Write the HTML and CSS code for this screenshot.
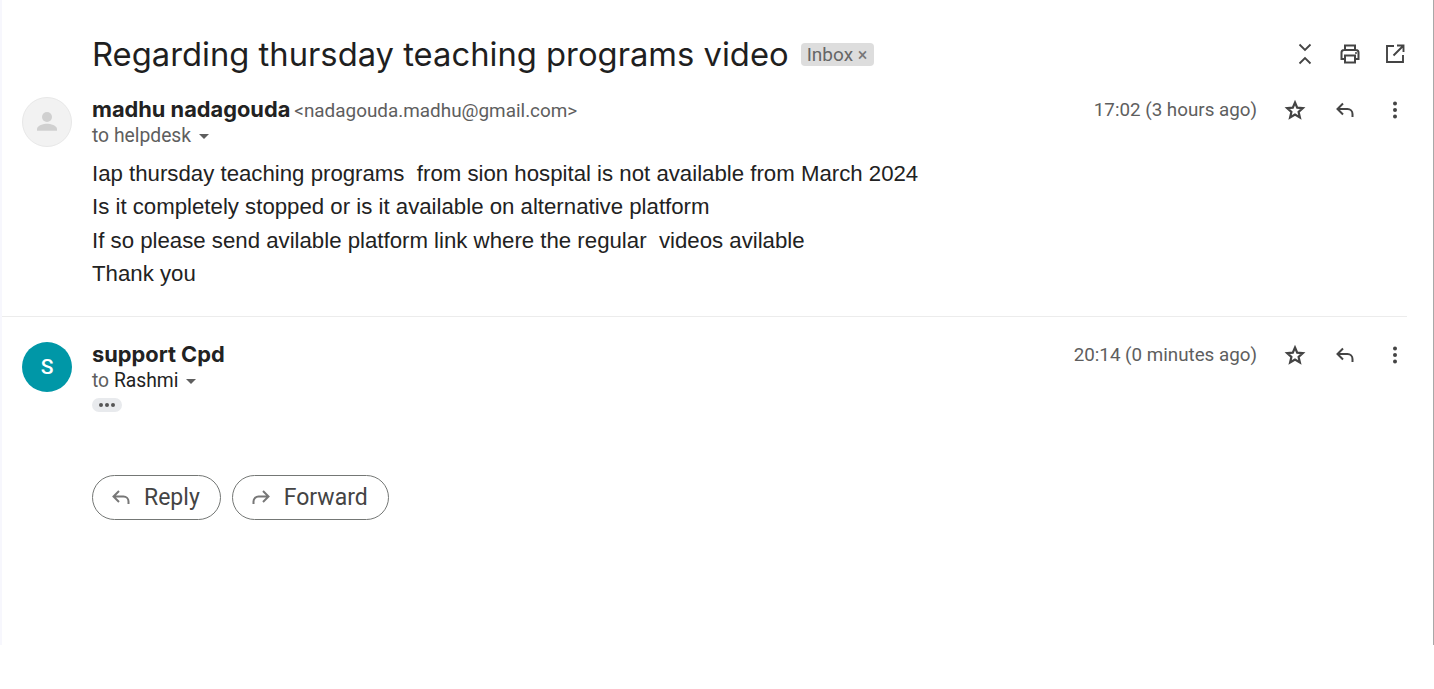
FILE: index.html
```html
<!DOCTYPE html>
<html lang="en">
<head>
    <meta charset="UTF-8">
    <meta name="viewport" content="width=device-width, initial-scale=1.0">
    <title>Regarding thursday teaching programs video</title>
    <link rel="stylesheet" href="styles.css">
</head>
<body>
    <div class="page">
        <div class="subject-row">
            <h1 class="subject">Regarding thursday teaching programs video</h1>
            <span class="label">Inbox <span class="label-x">×</span></span>
            <div class="top-icons">
                <svg class="icon" viewBox="0 0 24 24"><path d="M6.500 2.500 12 8l5.500-5.500M6.500 21.500 12 16l5.500 5.500" fill="none" stroke="#444" stroke-width="1.800"/></svg>
                <svg class="icon" viewBox="0 0 24 24"><path d="M7 8V3.500h10V8M7 17H3.500V10.500a2.500 2.500 0 0 1 2.500-2.500h12a2.500 2.500 0 0 1 2.500 2.500V17H17M7 13.500h10v7H7z" fill="none" stroke="#444" stroke-width="2"/><circle cx="18" cy="11" r="1" fill="#444"/></svg>
                <svg class="icon" viewBox="0 0 24 24"><path d="M11 4H4v16h16v-7M14 3.500h6.500V10M20 4 10.500 13.500" fill="none" stroke="#444" stroke-width="1.900"/></svg>
            </div>
        </div>

        <div class="message">
            <div class="avatar avatar-blank">
                <svg viewBox="0 0 24 24" width="30" height="30"><circle cx="12" cy="8" r="4" fill="#d0d0d0"/><path d="M4 19v-1.500c0-2.700 5.300-4.200 8-4.200s8 1.500 8 4.200V19z" fill="#d0d0d0"/></svg>
            </div>
            <div class="message-main">
                <div class="message-head">
                    <div class="sender-info">
                        <div><span class="sender">madhu nadagouda</span> <span class="email">&lt;nadagouda.madhu@gmail.com&gt;</span></div>
                        <div class="recipient">to helpdesk <span class="caret"></span></div>
                    </div>
                    <div class="msg-meta">
                        <span class="time">17:02 (3 hours ago)</span>
                        <svg class="icon" viewBox="0 0 24 24"><path d="M12 4.500 14.200 9.700 19.800 10.200 15.600 13.900 16.900 19.400 12 16.500 7.100 19.400 8.400 13.900 4.200 10.200 9.800 9.700z" fill="none" stroke="#444" stroke-width="2.200"/></svg>
                        <svg class="icon" viewBox="0 0 24 24"><path d="M10 5.500 4.500 11l5.500 5.500M5 11h9.500a5 5 0 0 1 5 5v3" fill="none" stroke="#444" stroke-width="2"/></svg>
                        <svg class="icon" viewBox="0 0 24 24"><circle cx="12" cy="5.500" r="2" fill="#444"/><circle cx="12" cy="12" r="2" fill="#444"/><circle cx="12" cy="18.500" r="2" fill="#444"/></svg>
                    </div>
                </div>
                <div class="message-body">
                    <p>Iap thursday teaching programs  from sion hospital is not available from March 2024</p>
                    <p>Is it completely stopped or is it available on alternative platform</p>
                    <p>If so please send avilable platform link where the regular  videos avilable</p>
                    <p>Thank you</p>
                </div>
            </div>
        </div>

        <hr class="divider">

        <div class="message">
            <div class="avatar avatar-s">S</div>
            <div class="message-main">
                <div class="message-head">
                    <div class="sender-info">
                        <div><span class="sender">support Cpd</span></div>
                        <div class="recipient">to <span class="recipient-name">Rashmi</span> <span class="caret"></span></div>
                    </div>
                    <div class="msg-meta">
                        <span class="time">20:14 (0 minutes ago)</span>
                        <svg class="icon" viewBox="0 0 24 24"><path d="M12 4.500 14.200 9.700 19.800 10.200 15.600 13.900 16.900 19.400 12 16.500 7.100 19.400 8.400 13.900 4.200 10.200 9.800 9.700z" fill="none" stroke="#444" stroke-width="2.200"/></svg>
                        <svg class="icon" viewBox="0 0 24 24"><path d="M10 5.500 4.500 11l5.500 5.500M5 11h9.500a5 5 0 0 1 5 5v3" fill="none" stroke="#444" stroke-width="2"/></svg>
                        <svg class="icon" viewBox="0 0 24 24"><circle cx="12" cy="5.500" r="2" fill="#444"/><circle cx="12" cy="12" r="2" fill="#444"/><circle cx="12" cy="18.500" r="2" fill="#444"/></svg>
                    </div>
                </div>
                <div class="dots"><i></i><i></i><i></i></div>
            </div>
        </div>

        <div class="actions">
            <button class="action-btn">
                <svg viewBox="0 0 24 24" width="24" height="24"><path d="M10 6 4.500 11.500 10 17M5 11.500h9.500a5 5 0 0 1 5 5V19" fill="none" stroke="#777" stroke-width="2"/></svg>
                Reply
            </button>
            <button class="action-btn">
                <svg viewBox="0 0 24 24" width="24" height="24"><path d="M14 6 19.500 11.500 14 17M19 11.500H9.500a5 5 0 0 0-5 5V19" fill="none" stroke="#777" stroke-width="2"/></svg>
                Forward
            </button>
        </div>
    </div>
</body>
</html>
```

FILE: styles.css
```css
body {
    margin: 0;
    background-color: #fff;
    font-family: Roboto, Arial, sans-serif;
    color: #222;
    overflow: hidden;
}
.page {
    box-sizing: border-box;
    width: 1434px;
    height: 645px;
    border-left: 2px solid #f7f7fd;
    border-right: 1px solid #a8a8a8;
}
.subject-row {
    display: flex;
    align-items: center;
    height: 42px;
    padding: 33px 26px 0 90px;
    margin-bottom: 22px;
}
.subject {
    margin: 0;
    font-family: Inter, Roboto, sans-serif;
    font-size: 32.75px;
    font-weight: 400;
    color: #1f1f1f;
    white-space: nowrap;
}
.label {
    margin-left: 12px;
    padding: 0 7px 0 6px;
    height: 23px;
    line-height: 23px;
    background-color: #dddddd;
    border-radius: 4px;
    font-size: 19px;
    color: #666;
    white-space: nowrap;
}
.label-x {
    font-size: 18px;
    color: #777;
}
.top-icons {
    margin-left: auto;
    display: flex;
    gap: 21px;
}
.icon {
    width: 24px;
    height: 24px;
    flex: none;
}
.message {
    display: flex;
    padding-left: 20px;
    padding-right: 26px;
}
.avatar {
    box-sizing: border-box;
    width: 50px;
    height: 50px;
    border-radius: 50%;
    flex: none;
    display: flex;
    align-items: center;
    justify-content: center;
}
.avatar-blank {
    background-color: #f2f2f2;
    border: 1px solid #e8e8e8;
}
.avatar-s {
    background-color: #0097a7;
    color: #fff;
    font-size: 21px;
    font-weight: 500;
}
.message-main {
    flex: 1;
    margin-left: 20px;
}
.message-head {
    display: flex;
    justify-content: space-between;
    align-items: flex-start;
}
.sender-info {
    line-height: 25px;
}
.sender {
    font-family: Inter, Roboto, sans-serif;
    font-size: 21.8px;
    font-weight: 700;
    color: #222;
}
.email {
    font-size: 18.9px;
    color: #5e5e5e;
}
.recipient {
    font-size: 19.3px;
    line-height: 23px;
    color: #5e5e5e;
}
.recipient-name {
    color: #222;
}
.caret {
    display: inline-block;
    margin-left: 3px;
    vertical-align: middle;
    border-left: 5px solid transparent;
    border-right: 5px solid transparent;
    border-top: 5px solid #5e5e5e;
}
.msg-meta {
    display: flex;
    align-items: center;
    gap: 26px;
    height: 24px;
    margin-top: 1px;
}
.time {
    font-size: 18.8px;
    color: #5e5e5e;
}
.message-body {
    margin-top: 9.6px;
    font-family: "Liberation Sans", Arial, sans-serif;
    font-size: 22.23px;
    line-height: 33.5px;
    color: #222;
}
.message-body p {
    margin: 0;
    white-space: pre-wrap;
}
.divider {
    border: 0;
    border-top: 1px solid #ececec;
    margin: 25.4px 26px 25px 0;
}
.dots {
    display: flex;
    align-items: center;
    justify-content: center;
    gap: 2px;
    width: 30px;
    height: 14px;
    margin-top: 6px;
    border-radius: 7px;
    background-color: #e8eaed;
}
.dots i {
    width: 4px;
    height: 4px;
    border-radius: 50%;
    background-color: #555;
}
.actions {
    display: flex;
    gap: 11px;
    padding-left: 90px;
    margin-top: 63px;
}
.action-btn {
    display: flex;
    align-items: center;
    gap: 11px;
    height: 45px;
    padding: 0 20px 0 16px;
    background-color: #fff;
    border: 1px solid #747775;
    border-radius: 23px;
    font-family: Roboto, Arial, sans-serif;
    font-size: 23px;
    color: #444;
}
```
